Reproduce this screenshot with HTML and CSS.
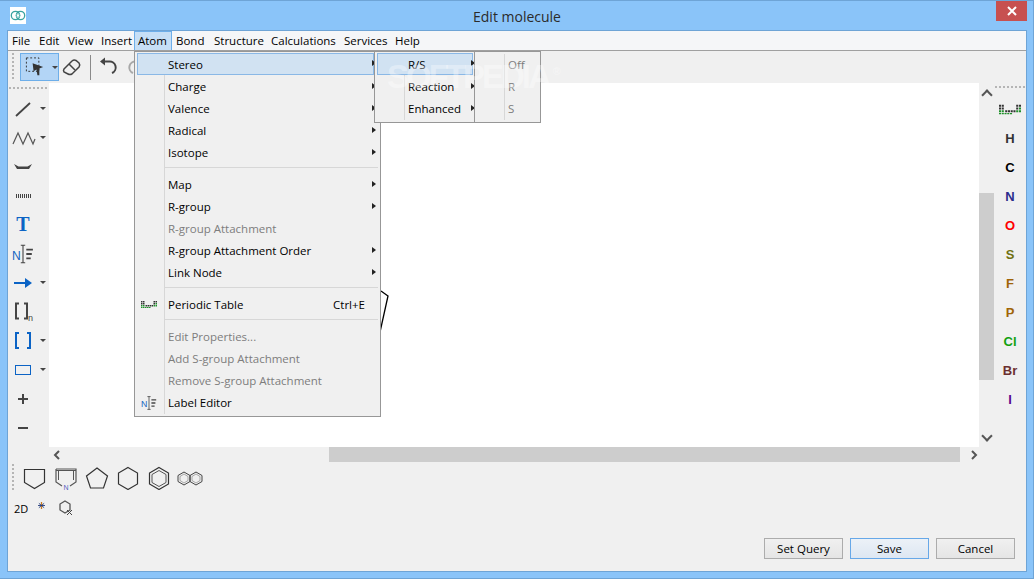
FILE: index.html
```html
<!DOCTYPE html>
<html lang="en">
<head>
    <meta charset="UTF-8">
    <title>Edit molecule</title>
    <link rel="stylesheet" href="styles.css">
</head>
<body>
    <svg class="defs" width="0" height="0">
        <defs>
            <symbol id="ptable" viewBox="0 0 32 14">
                <path fill="#333" d="M0 0h3v3H0zM4 0h3v3H4zM0 4h3v3H0zM4 4h3v3H4zM25 0h3v3h-3zM29 0h3v3h-3zM25 4h3v3h-3zM9 8h3v3H9zM13 8h3v3h-3zM17 8h3v3h-3zM21 8h3v3h-3z"/>
                <path fill="#1f8f2a" d="M0 8h3v3H0zM4 8h3v3H4zM0 12h3v2H0zM4 12h3v2H4zM8 12h3v2H8zM12 12h3v2h-3zM16 12h3v2h-3zM25 8h3v3h-3zM29 8h3v3h-3zM29 4h3v3h-3z"/>
            </symbol>
            <symbol id="labeleditor" viewBox="0 0 20 20">
                <text x="0" y="15" font-family="Liberation Sans" font-size="11" fill="#1565c0">N</text>
                <path fill="none" stroke="#444" d="M8 2h4M10 2v16M8 18h4"/>
                <path fill="none" stroke="#444" stroke-width="1.6" d="M13 6h6M13 10h5M13 14h4"/>
            </symbol>
        </defs>
    </svg>

    <div class="window">
        <header class="titlebar">
            <svg class="app-icon" width="16" height="17" viewBox="0 0 16 17">
                <rect width="16" height="17" fill="#fff"/>
                <circle cx="5.500" cy="8.500" r="4.200" fill="none" stroke="#3aa3a0" stroke-width="1.300"/>
                <circle cx="10.500" cy="8.500" r="4.200" fill="none" stroke="#3aa3a0" stroke-width="1.300"/>
                <circle cx="8" cy="8.500" r="1.800" fill="none" stroke="#7cc4c2"/>
            </svg>
            <span class="title">Edit molecule</span>
            <button class="close" type="button" aria-label="Close">
                <svg width="10" height="10" viewBox="0 0 10 10"><path d="M1 1l8 8M9 1l-8 8" stroke="#fff" stroke-width="2"/></svg>
            </button>
        </header>

        <div class="client">
            <nav class="menubar">
                <span class="menu-title">File</span>
                <span class="menu-title">Edit</span>
                <span class="menu-title">View</span>
                <span class="menu-title">Insert</span>
                <span class="menu-title open">Atom</span>
                <span class="menu-title">Bond</span>
                <span class="menu-title">Structure</span>
                <span class="menu-title">Calculations</span>
                <span class="menu-title">Services</span>
                <span class="menu-title">Help</span>
            </nav>

            <div class="toolbar">
                <span class="grip-v"></span>
                <button class="select-tool" type="button" aria-label="Select">
                    <svg width="24" height="22" viewBox="0 0 24 22">
                        <rect x="2.500" y="1.500" width="13" height="14" fill="none" stroke="#333" stroke-dasharray="2 2"/>
                        <path d="M9 7l11 4-4 1.500 0 7-2 0-1-6-3 2z" fill="#333"/>
                    </svg>
                    <i class="caret"></i>
                </button>
                <svg class="eraser" width="20" height="18" viewBox="0 0 20 18">
                    <path d="M2 11l8-8q2-1.500 4-.5l3 2.500q1.500 2 0 4l-7 7q-2 1-4 0l-4-2q-1-1.500 0-3z" fill="none" stroke="#444" stroke-width="1.500"/>
                    <path d="M7 6l6 6" stroke="#444" stroke-width="1.500"/>
                </svg>
                <span class="tool-sep"></span>
                <svg class="undo" width="20" height="20" viewBox="0 0 20 20">
                    <path d="M5 4.500h5a6 6 0 0 1 3 11.500" fill="none" stroke="#444" stroke-width="2"/>
                    <path d="M1 4.500l5-4v8z" fill="#444"/>
                </svg>
                <svg class="redo" width="20" height="20" viewBox="0 0 20 20">
                    <path d="M15 4.500h-5a6 6 0 0 0-3 11.500" fill="none" stroke="#a8a8a8" stroke-width="2"/>
                </svg>
            </div>

            <div class="workarea">
                <aside class="left-tools">
                    <span class="grip-h"></span>
                    <div class="tool">
                        <svg width="30" height="24" viewBox="0 0 30 24"><path d="M8 19L22 6" stroke="#444" stroke-width="1.800"/></svg>
                        <i class="caret"></i>
                    </div>
                    <div class="tool">
                        <svg width="30" height="24" viewBox="0 0 30 24"><path d="M5 18l5-11 5 11 5-11 5 11 2-5" fill="none" stroke="#555" stroke-width="1.200"/></svg>
                        <i class="caret"></i>
                    </div>
                    <div class="tool">
                        <svg width="30" height="24" viewBox="0 0 30 24"><path d="M6 9l4.500 2.500h9L24 9l-3 5H9z" fill="#444"/></svg>
                    </div>
                    <div class="tool">
                        <svg width="30" height="24" viewBox="0 0 30 24" shape-rendering="crispEdges"><path d="M8.500 10v4M10.500 10v4M12.500 10v4M14.500 10v4M16.500 10v4M18.500 10v4M20.500 10v4M22.500 10v4" stroke="#444"/></svg>
                    </div>
                    <div class="tool">
                        <span class="tool-t">T</span>
                    </div>
                    <div class="tool">
                        <svg class="label-tool" width="22" height="22"><use href="#labeleditor"/></svg>
                    </div>
                    <div class="tool">
                        <svg width="30" height="24" viewBox="0 0 30 24"><path d="M6 12h14" stroke="#0b63c5" stroke-width="2"/><path d="M17 7l7 5-7 5z" fill="#0b63c5"/></svg>
                        <i class="caret"></i>
                    </div>
                    <div class="tool">
                        <svg width="30" height="24" viewBox="0 0 30 24">
                            <path d="M11 3.500H8v15h3M16 3.500h3v15h-3" fill="none" stroke="#444" stroke-width="2"/>
                            <text x="20" y="21" font-family="Liberation Sans" font-size="9" fill="#444">n</text>
                        </svg>
                    </div>
                    <div class="tool">
                        <svg width="30" height="24" viewBox="0 0 30 24"><path d="M11 4H8v15h3M19 4h3v15h-3" fill="none" stroke="#0b63c5" stroke-width="2"/></svg>
                        <i class="caret"></i>
                    </div>
                    <div class="tool">
                        <svg width="30" height="24" viewBox="0 0 30 24"><rect x="7.500" y="7.500" width="15" height="9" fill="none" stroke="#0b63c5"/></svg>
                        <i class="caret"></i>
                    </div>
                    <div class="tool">
                        <svg width="30" height="24" viewBox="0 0 30 24"><path d="M15 7v10M10 12h10" stroke="#444" stroke-width="2"/></svg>
                    </div>
                    <div class="tool">
                        <svg width="30" height="24" viewBox="0 0 30 24"><path d="M10 12h10" stroke="#444" stroke-width="2"/></svg>
                    </div>
                </aside>

                <div class="center">
                    <div class="canvas-row">
                        <div class="canvas">
                            <svg class="fragment" width="12" height="44" viewBox="0 0 12 44"><path d="M1 1l7 5-8 36" fill="none" stroke="#000" stroke-width="1.300"/></svg>
                        </div>
                        <div class="vscroll">
                            <span class="vthumb"></span>
                        </div>
                    </div>
                    <div class="hscroll">
                        <svg class="hchev" width="8" height="10" viewBox="0 0 8 10"><path d="M6 1L2 5l4 4" fill="none" stroke="#555" stroke-width="2"/></svg>
                        <span class="hthumb"></span>
                        <svg class="hchev" width="8" height="10" viewBox="0 0 8 10"><path d="M2 1l4 4-4 4" fill="none" stroke="#555" stroke-width="2"/></svg>
                    </div>
                </div>

                <aside class="right-tools">
                    <span class="grip-h"></span>
                    <div class="element"><svg width="22" height="11"><use href="#ptable"/></svg></div>
                    <div class="element el-h">H</div>
                    <div class="element el-c">C</div>
                    <div class="element el-n">N</div>
                    <div class="element el-o">O</div>
                    <div class="element el-s">S</div>
                    <div class="element el-f">F</div>
                    <div class="element el-p">P</div>
                    <div class="element el-cl">Cl</div>
                    <div class="element el-br">Br</div>
                    <div class="element el-i">I</div>
                </aside>
            </div>

            <div class="templates">
                <span class="grip-v"></span>
                <svg width="26" height="24" viewBox="0 0 26 24"><path d="M2.500 3.500h20v13l-10 6-10-6z" fill="none" stroke="#333" stroke-width="1.200"/></svg>
                <svg width="26" height="24" viewBox="0 0 26 24">
                    <path d="M3 3h20v13l-6 4M3 3v13l6 4" fill="none" stroke="#555" stroke-width="1.200"/>
                    <path d="M3 4.500h20M5.500 5v9M20.500 5v9" stroke="#555"/>
                    <text x="10.500" y="24" font-family="Liberation Sans" font-size="7" fill="#5560c0">N</text>
                </svg>
                <svg width="26" height="24" viewBox="0 0 26 24"><path d="M13 2l10.500 8-4 12h-13l-4-12z" fill="none" stroke="#333" stroke-width="1.200"/></svg>
                <svg width="26" height="24" viewBox="0 0 26 24"><path d="M13 1.500l9.500 5.500v11l-9.500 5.500-9.500-5.500V7z" fill="none" stroke="#333" stroke-width="1.200"/></svg>
                <svg width="26" height="24" viewBox="0 0 26 24"><path d="M13 1.500l9.500 5.500v11l-9.500 5.500-9.500-5.500V7z" fill="none" stroke="#333" stroke-width="1.200"/><path d="M13 4.500l7 4v8l-7 4-7-4v-8z" fill="none" stroke="#555"/></svg>
                <svg width="26" height="24" viewBox="0 0 26 24">
                    <path d="M7 6l6 3.500v6L7 19l-6-3.500v-6zM19 6l6 3.500v6L19 19l-6-3.500v-6z" fill="none" stroke="#444"/>
                    <path d="M7 8l4 2.500v4L7 17l-4-2.500v-4zM19 8l4 2.500v4L19 17l-4-2.500v-4z" fill="none" stroke="#888" stroke-width=".7"/>
                </svg>
            </div>

            <div class="query-row">
                <span class="label-2d">2D</span>
                <svg class="star" width="7" height="7" viewBox="0 0 8 8"><path d="M4 0v8" stroke="#c77a20" stroke-width="1.500"/><path d="M0 4h8M1 1.500l6 5M7 1.500l-6 5" stroke="#223a7a"/></svg>
                <svg class="ring-x" width="14" height="16" viewBox="0 0 14 16">
                    <path d="M6 1l5 3v6l-5 3-5-3V4z" fill="none" stroke="#555" stroke-width="1.300"/>
                    <path d="M8 10l5 5M13 10l-5 5" stroke="#444"/>
                </svg>
            </div>

            <footer class="buttons">
                <button type="button">Set Query</button>
                <button type="button" class="primary">Save</button>
                <button type="button">Cancel</button>
            </footer>
        </div>

        <ul class="menu atom-menu">
            <li class="active has-sub">Stereo</li>
            <li class="has-sub">Charge</li>
            <li class="has-sub">Valence</li>
            <li class="has-sub">Radical</li>
            <li class="has-sub">Isotope</li>
            <li class="sep"></li>
            <li class="has-sub">Map</li>
            <li class="has-sub">R-group</li>
            <li class="disabled">R-group Attachment</li>
            <li class="has-sub">R-group Attachment Order</li>
            <li class="has-sub">Link Node</li>
            <li class="sep"></li>
            <li><svg class="item-icon" width="16" height="7"><use href="#ptable"/></svg>Periodic Table<span class="shortcut">Ctrl+E</span></li>
            <li class="sep"></li>
            <li class="disabled">Edit Properties...</li>
            <li class="disabled">Add S-group Attachment</li>
            <li class="disabled">Remove S-group Attachment</li>
            <li><svg class="item-icon le" width="16" height="16"><use href="#labeleditor"/></svg>Label Editor</li>
        </ul>

        <ul class="menu stereo-menu">
            <li class="active has-sub">R/S</li>
            <li class="has-sub">Reaction</li>
            <li class="has-sub">Enhanced</li>
        </ul>

        <ul class="menu rs-menu">
            <li class="disabled">Off</li>
            <li class="disabled">R</li>
            <li class="disabled">S</li>
        </ul>

        <div class="watermark">SOFTPEDIA<sup>&reg;</sup></div>
    </div>
</body>
</html>
```

FILE: styles.css
```css
* {
    margin: 0;
    padding: 0;
    box-sizing: border-box;
}

body {
    font-family: "Open Sans", "Liberation Sans", sans-serif;
    font-size: 11.5px;
    color: #000;
    overflow: hidden;
}

.defs {
    position: absolute;
}

.window {
    position: relative;
    width: 1034px;
    height: 579px;
    padding: 0 7px 7px 8px;
    background: #8ac4f9;
    border: 1px solid #6ea4d6;
    border-width: 1px 1px 1px 0;
    display: flex;
    flex-direction: column;
}

/* title bar */
.titlebar {
    height: 30px;
    flex: none;
    display: flex;
    align-items: center;
    justify-content: center;
    position: relative;
}

.app-icon {
    position: absolute;
    left: 2px;
    top: 6px;
}

.title {
    font-size: 14px;
    color: #2b2b2b;
}

.close {
    position: absolute;
    right: -1px;
    top: 0;
    width: 31px;
    height: 20px;
    border: none;
    background: #c75050;
    display: flex;
    align-items: center;
    justify-content: center;
}

.client {
    flex: 1;
    display: flex;
    flex-direction: column;
    background: #f0f0f0;
    box-shadow: 0 0 0 1px #6ea4d6;
    min-height: 0;
}

/* menu bar */
.menubar {
    height: 20px;
    flex: none;
    display: grid;
    grid-template-columns: 27px 29px 33px 37px 38px 38px 57px 73px 51px auto;
    background: #f5f6f8;
    border-bottom: 1px solid #a0a0a0;
}

.menu-title {
    padding-left: 4px;
    line-height: 19px;
    white-space: nowrap;
}

.menu-title.open {
    background: #c6dff6;
    border: 1px solid #6daee9;
    border-bottom: none;
    line-height: 18px;
    padding-left: 3px;
}

/* main toolbar */
.toolbar {
    height: 32px;
    flex: none;
    display: flex;
    align-items: center;
    padding-left: 4px;
}

.grip-v {
    width: 2px;
    height: 28px;
    background: repeating-linear-gradient(to bottom, #b5b5b5 0 2px, transparent 2px 4px);
}

.grip-h {
    display: block;
    height: 2px;
    background: repeating-linear-gradient(to right, #b5b5b5 0 2px, transparent 2px 4px);
}

.select-tool {
    margin-left: 6px;
    width: 39px;
    height: 28px;
    background: #b3d5f6;
    border: 1px solid #6daee9;
    display: flex;
    align-items: center;
    padding-left: 3px;
    gap: 5px;
}

.caret {
    display: block;
    width: 0;
    height: 0;
    border-left: 3px solid transparent;
    border-right: 3px solid transparent;
    border-top: 3px solid #444;
}

.eraser {
    margin-left: 3px;
}

.tool-sep {
    width: 1px;
    height: 25px;
    background: #8a8a8a;
    margin-left: 8px;
}

.undo {
    margin-left: 8px;
}

.redo {
    margin-left: 7px;
}

/* work area */
.workarea {
    height: 379px;
    flex: none;
    display: flex;
}

.left-tools {
    width: 41px;
    flex: none;
    padding-top: 4px;
}

.left-tools .grip-h {
    margin: 0 1px 5px;
}

.tool {
    height: 29px;
    display: flex;
    align-items: center;
    gap: 2px;
}

.tool svg {
    flex: none;
}

.tool-t {
    width: 30px;
    text-align: center;
    font-family: "Liberation Serif", serif;
    font-weight: bold;
    font-size: 20px;
    color: #0b63c5;
}

.label-tool {
    margin-left: 4px;
}

.center {
    flex: 1;
    display: flex;
    flex-direction: column;
    min-width: 0;
}

.canvas-row {
    height: 364px;
    display: flex;
}

.canvas {
    flex: 1;
    background: #fff;
    position: relative;
}

.fragment {
    position: absolute;
    left: 331px;
    top: 207px;
}

.vscroll {
    width: 15px;
    flex: none;
    position: relative;
}

.vthumb {
    position: absolute;
    left: 0;
    right: 0;
    top: 110px;
    height: 187px;
    background: #cdcdcd;
}

.vscroll::before,
.vscroll::after {
    content: "";
    position: absolute;
    left: 4px;
    width: 6px;
    height: 6px;
    border-right: 2px solid #555;
    border-bottom: 2px solid #555;
}

.vscroll::before {
    top: 8px;
    transform: rotate(-135deg);
}

.vscroll::after {
    bottom: 7px;
    transform: rotate(45deg);
}

.hscroll {
    height: 15px;
    display: flex;
    align-items: center;
}

.hchev {
    flex: none;
    margin-left: 4px;
}

.hthumb {
    height: 15px;
    width: 631px;
    margin-left: 268px;
    margin-right: 6px;
    background: #cdcdcd;
}

.right-tools {
    width: 32px;
    flex: none;
    padding-top: 3px;
}

.right-tools .grip-h {
    margin: 0 1px 7px;
}

.element {
    height: 29px;
    display: flex;
    align-items: center;
    justify-content: center;
    font-family: "Liberation Sans", sans-serif;
    font-weight: bold;
    font-size: 13px;
}

.el-h { color: #333; }
.el-c { color: #000; }
.el-n { color: #2c2c8c; }
.el-o { color: #f00; }
.el-s { color: #707010; }
.el-f { color: #a06408; }
.el-p { color: #a06408; }
.el-cl { color: #10a010; }
.el-br { color: #6b2f2f; }
.el-i { color: #5a0a90; }

/* template toolbars */
.templates {
    height: 32px;
    flex: none;
    display: flex;
    align-items: center;
    padding-left: 4px;
    gap: 5px;
}

.templates .grip-v {
    margin-right: 3px;
}

.query-row {
    height: 28px;
    flex: none;
    display: flex;
    align-items: center;
    padding-left: 6px;
    gap: 10px;
    font-size: 11px;
}

.star {
    margin-bottom: 5px;
}

.ring-x {
    margin-left: 4px;
}

.buttons {
    margin-top: auto;
    margin-bottom: 12px;
    margin-right: 11px;
    display: flex;
    justify-content: flex-end;
    gap: 7px;
}

.buttons button {
    width: 79px;
    height: 21px;
    font: inherit;
    color: #000;
    border: 1px solid #acacac;
    background: linear-gradient(#f0f0f0, #e5e5e5);
}

.buttons .primary {
    border-color: #67a8e8;
    background: linear-gradient(#ecf1f7, #dde7f2);
}

/* popup menus */
.menu {
    position: absolute;
    list-style: none;
    background: #f0f0f0;
    border: 1px solid #979797;
    padding: 2px;
    top: 50px;
}

.menu::before {
    content: "";
    position: absolute;
    top: 2px;
    bottom: 2px;
    width: 1px;
    background: #d7d7d7;
}

.menu li {
    height: 22px;
    line-height: 21px;
    position: relative;
    white-space: nowrap;
}

.menu li.sep {
    height: 10px;
}

.menu li.sep::before {
    content: "";
    position: absolute;
    left: 28px;
    right: 0;
    top: 3px;
    height: 1px;
    background: #d7d7d7;
}

.menu li.active {
    margin-top: -1px;
    margin-bottom: 1px;
    background: #d1e2f2;
    border: 1px solid #8ab8e6;
    line-height: 21px;
}

.menu li.disabled {
    color: #7d7d7d;
}

.menu li.has-sub::after {
    content: "";
    position: absolute;
    top: 7px;
    width: 0;
    height: 0;
    border-top: 3.500px solid transparent;
    border-bottom: 3.500px solid transparent;
    border-left: 4px solid #222;
}

.atom-menu {
    left: 134px;
    width: 247px;
}

.atom-menu::before {
    left: 29px;
}

.atom-menu li {
    padding-left: 31px;
}

.atom-menu li.active {
    padding-left: 30px;
    margin-right: 4px;
}

.atom-menu li.has-sub::after {
    right: 2px;
}

.atom-menu li.active.has-sub::after {
    right: -3px;
    top: 6px;
}

.item-icon {
    position: absolute;
    left: 4px;
    top: 7px;
}

.item-icon.le {
    top: 3px;
}

.shortcut {
    position: absolute;
    right: 13px;
}

.stereo-menu {
    left: 374px;
    width: 101px;
}

.stereo-menu::before {
    left: 29px;
}

.stereo-menu li {
    padding-left: 31px;
}

.stereo-menu li.active {
    padding-left: 30px;
    margin-right: -1px;
}

.stereo-menu li.has-sub::after {
    right: -3px;
}

.stereo-menu li.active.has-sub::after {
    right: -3px;
    top: 6px;
}

.rs-menu {
    left: 474px;
    width: 67px;
}

.rs-menu::before {
    left: 29px;
}

.rs-menu li {
    padding-left: 31px;
}

/* site watermark */
.watermark {
    position: absolute;
    left: 387px;
    top: 57px;
    font-family: "Liberation Sans", sans-serif;
    font-size: 33px;
    font-weight: bold;
    letter-spacing: -3px;
    color: rgba(255, 255, 255, 0.35);
    pointer-events: none;
}

.watermark sup {
    font-size: 11px;
    letter-spacing: 0;
    margin-left: 4px;
    vertical-align: top;
    line-height: 26px;
}
```
